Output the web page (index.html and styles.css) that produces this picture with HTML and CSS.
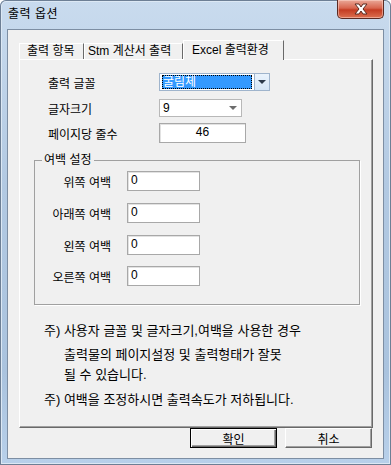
FILE: index.html
```html
<!DOCTYPE html>
<html>
<head>
    <meta name="viewport" content="width=device-width, initial-scale=1.0">
    <link rel="stylesheet" href="styles.css">
</head>
<body>
    <div class="window">
        <div class="titlebar">
            <span class="title">출력 옵션</span>
            <div class="close-button">
                <svg width="16" height="12" viewBox="0 0 16 12">
                    <path d="M2 1 L6 1 L8 4 L10 1 L14 1 L10 6 L14 11 L10 11 L8 8 L6 11 L2 11 L6 6 Z" fill="#fff" stroke="#5a2a20" stroke-width="1"/>
                </svg>
            </div>
        </div>

        <div class="client">
            <div class="tabs">
                <div class="tab tab-one">출력 항목</div>
                <div class="tab tab-two">Stm 계산서 출력</div>
                <div class="tab tab-active">Excel 출력환경</div>
            </div>

            <div class="panel">
                <div class="options">
                    <div class="option-row">
                        <span class="option-label">출력 글꼴</span>
                        <div class="combo combo-focus">
                            <div class="combo-value"><span class="selected-text">굴림체</span></div>
                            <div class="combo-button"><span class="arrow"></span></div>
                        </div>
                    </div>
                    <div class="option-row row-size">
                        <span class="option-label">글자크기</span>
                        <div class="combo combo-flat">
                            <span class="combo-text">9</span>
                            <span class="arrow arrow-gray"></span>
                        </div>
                    </div>
                    <div class="option-row row-lines">
                        <span class="option-label">페이지당 줄수</span>
                        <div class="textbox textbox-center">46</div>
                    </div>
                </div>

                <fieldset class="margin-group">
                    <legend>여백 설정</legend>
                    <div class="margin-row">
                        <span class="margin-label">위쪽 여백</span>
                        <div class="textbox">0</div>
                    </div>
                    <div class="margin-row">
                        <span class="margin-label">아래쪽 여백</span>
                        <div class="textbox">0</div>
                    </div>
                    <div class="margin-row">
                        <span class="margin-label">왼쪽 여백</span>
                        <div class="textbox">0</div>
                    </div>
                    <div class="margin-row">
                        <span class="margin-label">오른쪽 여백</span>
                        <div class="textbox">0</div>
                    </div>
                </fieldset>

                <div class="notes">
                    <p class="note-first">주) 사용자 글꼴 및 글자크기,여백을 사용한 경우</p>
                    <p class="note-indent">출력물의 페이지설정 및 출력형태가 잘못</p>
                    <p class="note-indent note-tight">될 수 있습니다.</p>
                    <p class="note-last">주) 여백을 조정하시면 출력속도가 저하됩니다.</p>
                </div>
            </div>

            <div class="buttons">
                <button class="button button-default">확인</button>
                <button class="button">취소</button>
            </div>
        </div>
    </div>
</body>
</html>
```

FILE: styles.css
```css
* {
    box-sizing: border-box;
}

body {
    margin: 0;
    padding: 0;
    font-family: "Liberation Sans", "Noto Sans CJK KR", sans-serif;
    font-size: 12px;
    color: #000;
    background-color: #fff;
}

.window {
    width: 391px;
    height: 465px;
    padding: 0 7px 6px 7px;
    display: flex;
    flex-direction: column;
    background: linear-gradient(to bottom, #c9dbee, #b2c9e2 40%, #aac3de 80%, #b8d0ea);
    border-radius: 6px 6px 0 0;
    box-shadow: inset 0 0 0 1px #6d7f95, inset 0 0 0 2px #dce8f4;
}

.titlebar {
    height: 29px;
    display: flex;
    align-items: flex-start;
}

.title {
    margin-top: 7px;
    margin-left: 1px;
    line-height: 14px;
    letter-spacing: 0.5px;
    color: #000;
}

.close-button {
    margin-left: auto;
    width: 47px;
    height: 19px;
    display: flex;
    align-items: center;
    justify-content: center;
    background: linear-gradient(to bottom, #eaa898, #d8654e 45%, #c43c22 55%, #dc7050);
    border: 1px solid #5b2a22;
    border-top: none;
    border-radius: 0 0 5px 5px;
    box-shadow: inset 0 0 0 1px rgba(255, 220, 210, 0.5);
}

.client {
    flex: 1;
    display: flex;
    flex-direction: column;
    background-color: #f0f0f0;
    border: 1px solid #7d8ea3;
}

/* tab strip */
.tabs {
    display: flex;
    align-items: flex-end;
    margin-top: 10px;
    margin-left: 11px;
    height: 19px;
}

.tab {
    height: 16px;
    line-height: 14px;
    border-top: 1px solid #fff;
    border-left: 1px solid #fff;
    border-right: 1px solid #696969;
    white-space: nowrap;
}

.tab-one {
    width: 65px;
    padding-left: 7px;
}

.tab-two {
    width: 99px;
    padding-left: 3px;
}

.tab-active {
    position: relative;
    z-index: 1;
    width: 101px;
    height: 20px;
    margin-bottom: -1px;
    padding-left: 8px;
    padding-top: 2px;
    background-color: #f0f0f0;
}

.panel {
    margin-left: 11px;
    width: 354px;
    height: 369px;
    border-top: 1px solid #fff;
    border-left: 1px solid #fff;
    border-right: 1px solid #696969;
    border-bottom: 1px solid #696969;
    box-shadow: inset -1px -1px 0 #a0a0a0;
}

/* font / size / lines */
.options {
    padding-top: 13px;
    padding-left: 28px;
}

.option-row {
    display: flex;
    align-items: center;
    height: 18px;
}

.row-size {
    margin-top: 8px;
}

.row-lines {
    margin-top: 6px;
    height: 20px;
}

.option-label {
    width: 111px;
    white-space: nowrap;
}

.combo {
    height: 18px;
    display: flex;
    align-items: center;
    background-color: #fff;
}

.combo-focus {
    width: 111px;
}

.combo-value {
    width: 95px;
    height: 18px;
    padding: 1px 2px;
    border: 1px solid #9fb4cc;
    border-right: none;
    background-color: #fff;
}

.selected-text {
    display: block;
    height: 14px;
    line-height: 14px;
    padding-left: 1px;
    color: #fff;
    background-color: #3399ff;
    outline: 1px dotted #000;
    outline-offset: -1px;
}

.combo-button {
    width: 16px;
    height: 18px;
    display: flex;
    align-items: center;
    justify-content: center;
    border: 1px solid #9fb4cc;
    background: linear-gradient(to bottom, #eaf3fc, #d6e6f6);
}

.arrow {
    width: 0;
    height: 0;
    border-left: 4px solid transparent;
    border-right: 4px solid transparent;
    border-top: 4px solid #2d3a4a;
}

.combo-flat {
    width: 83px;
    padding: 0 4px 0 3px;
    border: 1px solid #b8b8b8;
    justify-content: space-between;
}

.arrow-gray {
    border-top-color: #6d6d6d;
}

.textbox {
    width: 87px;
    height: 20px;
    padding: 1px 3px;
    line-height: 14px;
    background-color: #fff;
    border: 1px solid #a8a8a8;
    box-shadow: inset 1px 1px 0 #e2e2e2;
}

.textbox-center {
    text-align: center;
}

/* margin group */
.margin-group {
    margin: 10px 0 0 14px;
    width: 326px;
    height: 152px;
    padding: 4px 0 0 0;
    border: 1px solid #a0a0a0;
    box-shadow: 1px 1px 0 #fff;
}

.margin-group legend {
    margin-left: 7px;
    padding: 0 2px;
    line-height: 14px;
}

.margin-row {
    display: flex;
    align-items: center;
    margin-bottom: 12px;
}

.margin-row:nth-child(4) {
    margin-bottom: 11px;
}

.margin-label {
    width: 76px;
    text-align: right;
    white-space: nowrap;
    margin-right: 16px;
}

.margin-row .textbox {
    width: 73px;
}

/* notes */
.notes {
    padding-left: 24px;
    margin-top: 16px;
    font-size: 13px;
}

.notes p {
    margin: 0;
    line-height: 20px;
    white-space: nowrap;
}

.note-indent {
    padding-left: 20px;
    margin-top: 4px !important;
}

.note-tight {
    margin-top: 0 !important;
}

.note-last {
    margin-top: 5px !important;
}

/* dialog buttons */
.buttons {
    display: flex;
    justify-content: flex-end;
    gap: 8px;
    padding-right: 11px;
}

.button {
    width: 87px;
    height: 20px;
    padding: 0;
    font-family: "Liberation Sans", "Noto Sans CJK KR", sans-serif;
    font-size: 12px;
    color: #000;
    background-color: #f0f0f0;
    border-top: 1px solid #fff;
    border-left: 1px solid #fff;
    border-right: 1px solid #696969;
    border-bottom: 1px solid #696969;
    box-shadow: inset -1px -1px 0 #a0a0a0;
}

.button-default {
    border: 1px solid #000;
    box-shadow: inset 1px 1px 0 #fff, inset -1px -1px 0 #696969, inset -2px -2px 0 #a0a0a0;
}
```
